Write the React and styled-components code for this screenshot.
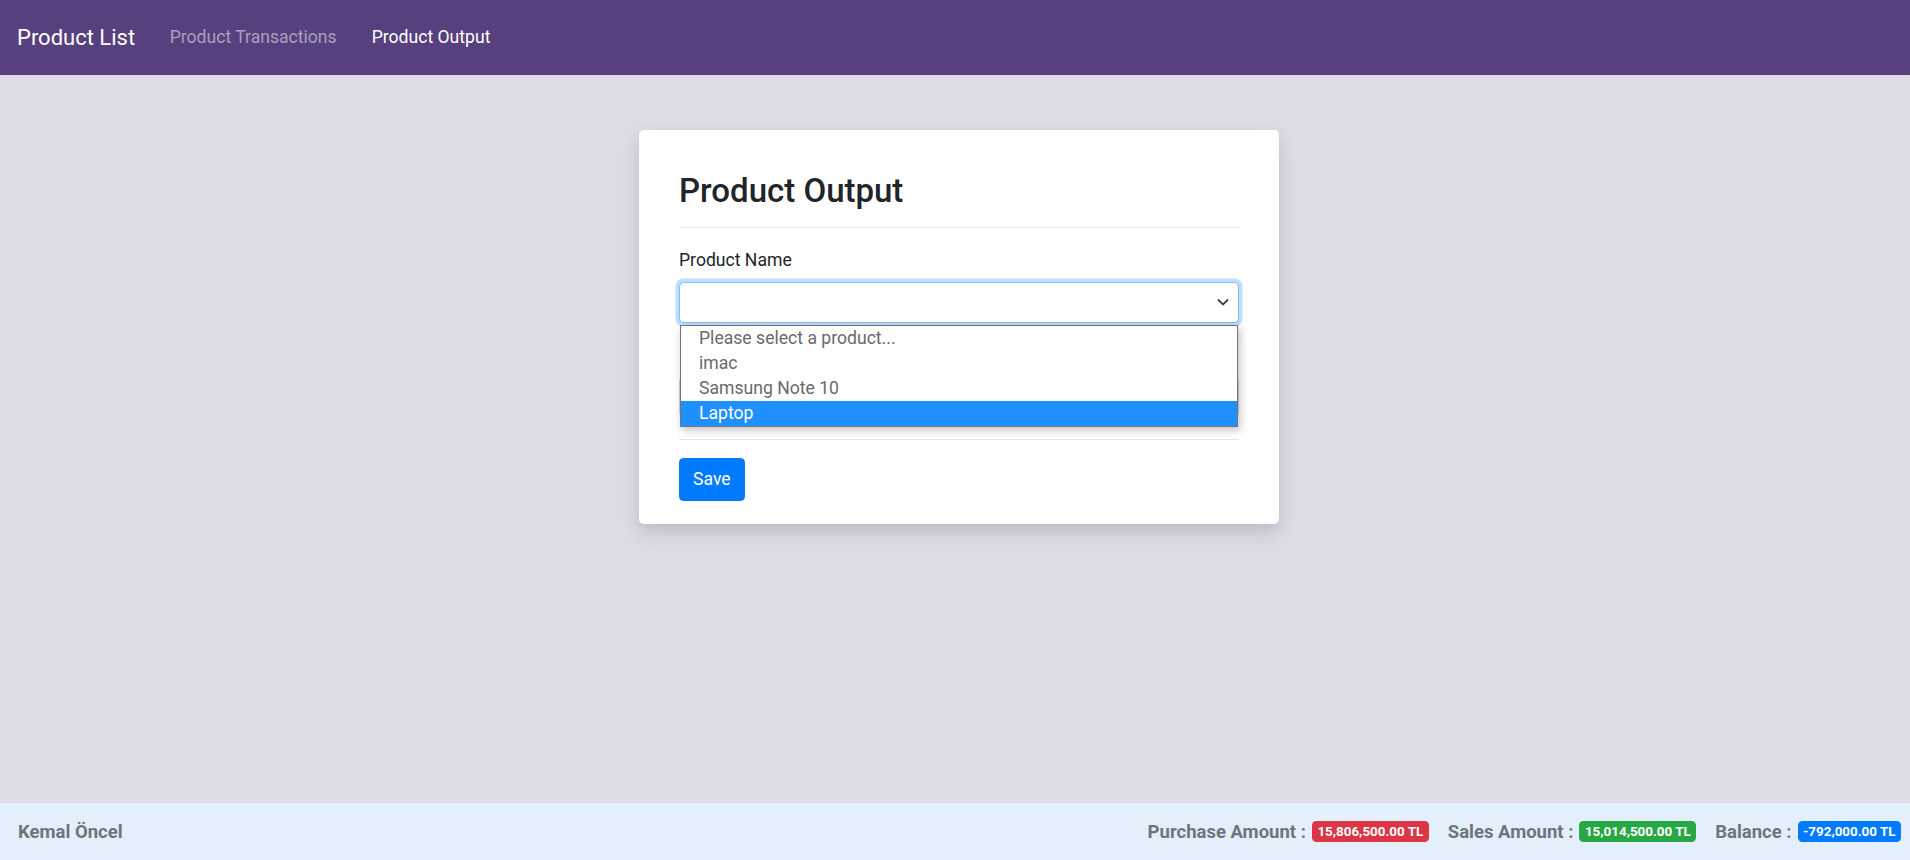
import React from "react";
import styled, { createGlobalStyle } from "styled-components";

const GlobalStyle = createGlobalStyle`
  * { box-sizing: border-box; }
  html, body { margin: 0; padding: 0; }
  body {
    font-family: Roboto, "Noto Sans", "Liberation Sans", sans-serif;
    color: #212529;
    background: #dedbe6;
  }
`;

const Page = styled.div`
  min-height: 100vh;
  display: flex;
  flex-direction: column;
`;

const Navbar = styled.nav`
  height: 75px;
  background: #57407d;
  display: flex;
  align-items: center;
  padding: 0 17px;
`;

const Brand = styled.a`
  font-size: 22px;
  color: #fff;
  text-decoration: none;
  margin-right: 17px;
  line-height: 1.5;
`;

const NavLink = styled.a`
  font-size: 17.6px;
  line-height: 1.5;
  padding: 0 17.5px;
  text-decoration: none;
  color: ${(p) => (p.$active ? "#fff" : "rgba(255,255,255,0.5)")};
`;

const Main = styled.main`
  flex: 1;
  display: flex;
  justify-content: center;
  align-items: flex-start;
  padding: 55px 0 0 8px;
`;

const Card = styled.div`
  width: 640px;
  background: #fff;
  border-radius: 5px;
  box-shadow: 0 8px 17px rgba(0, 0, 0, 0.15);
  padding: 41px 40px 23px;
`;

const Title = styled.h2`
  margin: 0;
  font-size: 33px;
  font-weight: 500;
  line-height: 1.2;
`;

const Rule = styled.hr`
  border: 0;
  border-top: 1px solid rgba(0, 0, 0, 0.1);
  margin: ${(p) => p.$margin};
`;

const FormGroup = styled.div`
  position: relative;
  margin-bottom: 17.6px;
`;

const Label = styled.label`
  display: block;
  min-height: 26.4px;
  font-size: 17.6px;
  line-height: 1.5;
  margin-bottom: 8.8px;
`;

const SelectBox = styled.div`
  height: 41px;
  border: 1px solid #80bdff;
  border-radius: 4.4px;
  box-shadow: 0 0 0 3.5px rgba(0, 123, 255, 0.25);
  background: #fff;
  display: flex;
  align-items: center;
  justify-content: flex-end;
  padding-right: 9px;
`;

const Input = styled.div`
  height: 41px;
  border: 1px solid #ced4da;
  border-radius: 4.4px;
  background: #fff;
`;

const Dropdown = styled.ul`
  position: absolute;
  z-index: 10;
  left: 1px;
  right: 1px;
  top: calc(100% + 2px);
  margin: 0;
  padding: 0;
  list-style: none;
  background: #fff;
  border: 1px solid #767676;
  box-shadow: 2px 3px 8px rgba(0, 0, 0, 0.25);
`;

const Option = styled.li`
  height: 25px;
  line-height: 25px;
  padding-left: 18px;
  font-size: 17.6px;
  color: ${(p) => (p.$selected ? "#fff" : "#6a6a6a")};
  background: ${(p) => (p.$selected ? "#1e90ff" : "transparent")};
`;

const Button = styled.button`
  height: 43px;
  padding: 0 13px;
  font-family: inherit;
  font-size: 17.6px;
  color: #fff;
  background: #007bff;
  border: 1px solid #007bff;
  border-radius: 4.4px;
`;

const Footer = styled.footer`
  height: 57px;
  background: #e3f0fb;
  display: flex;
  align-items: center;
  justify-content: space-between;
  padding: 0 9px 0 18px;
  font-weight: 700;
  font-size: 18.5px;
  color: #6c757d;
`;

const Stats = styled.div`
  display: flex;
  align-items: center;
  gap: 19px;
`;

const Stat = styled.span`
  display: flex;
  align-items: center;
  gap: 6px;
`;

const Badge = styled.span`
  display: inline-block;
  font-size: 13.4px;
  font-weight: 700;
  line-height: 1;
  color: #fff;
  padding: 3.5px 5.5px;
  border-radius: 4.4px;
  background: ${(p) => p.$bg};
`;

const Chevron = () => (
  <svg width="12" height="8" viewBox="0 0 12 8">
    <path d="M1 1.5 L6 6.5 L11 1.5" fill="none" stroke="#3b3f44" strokeWidth="1.8" />
  </svg>
);

export default function App() {
  const options = ["Please select a product...", "imac", "Samsung Note 10", "Laptop"];
  return (
    <>
      <GlobalStyle />
      <Page>
        <Navbar>
          <Brand href="#">Product List</Brand>
          <NavLink href="#">Product Transactions</NavLink>
          <NavLink href="#" $active>Product Output</NavLink>
        </Navbar>
        <Main>
          <Card>
            <Title>Product Output</Title>
            <Rule $margin="16px 0 19px" />
            <FormGroup>
              <Label>Product Name</Label>
              <SelectBox>
                <Chevron />
              </SelectBox>
              <Dropdown>
                {options.map((o, i) => (
                  <Option key={o} $selected={i === 3}>{o}</Option>
                ))}
              </Dropdown>
            </FormGroup>
            <FormGroup>
              <Label />
              <Input />
            </FormGroup>
            <Rule $margin="22px 0 18px" />
            <Button>Save</Button>
          </Card>
        </Main>
        <Footer>
          <span>Kemal Öncel</span>
          <Stats>
            <Stat>Purchase Amount : <Badge $bg="#dc3545">15,806,500.00 TL</Badge></Stat>
            <Stat>Sales Amount : <Badge $bg="#28a745">15,014,500.00 TL</Badge></Stat>
            <Stat>Balance : <Badge $bg="#007bff">-792,000.00 TL</Badge></Stat>
          </Stats>
        </Footer>
      </Page>
    </>
  );
}
